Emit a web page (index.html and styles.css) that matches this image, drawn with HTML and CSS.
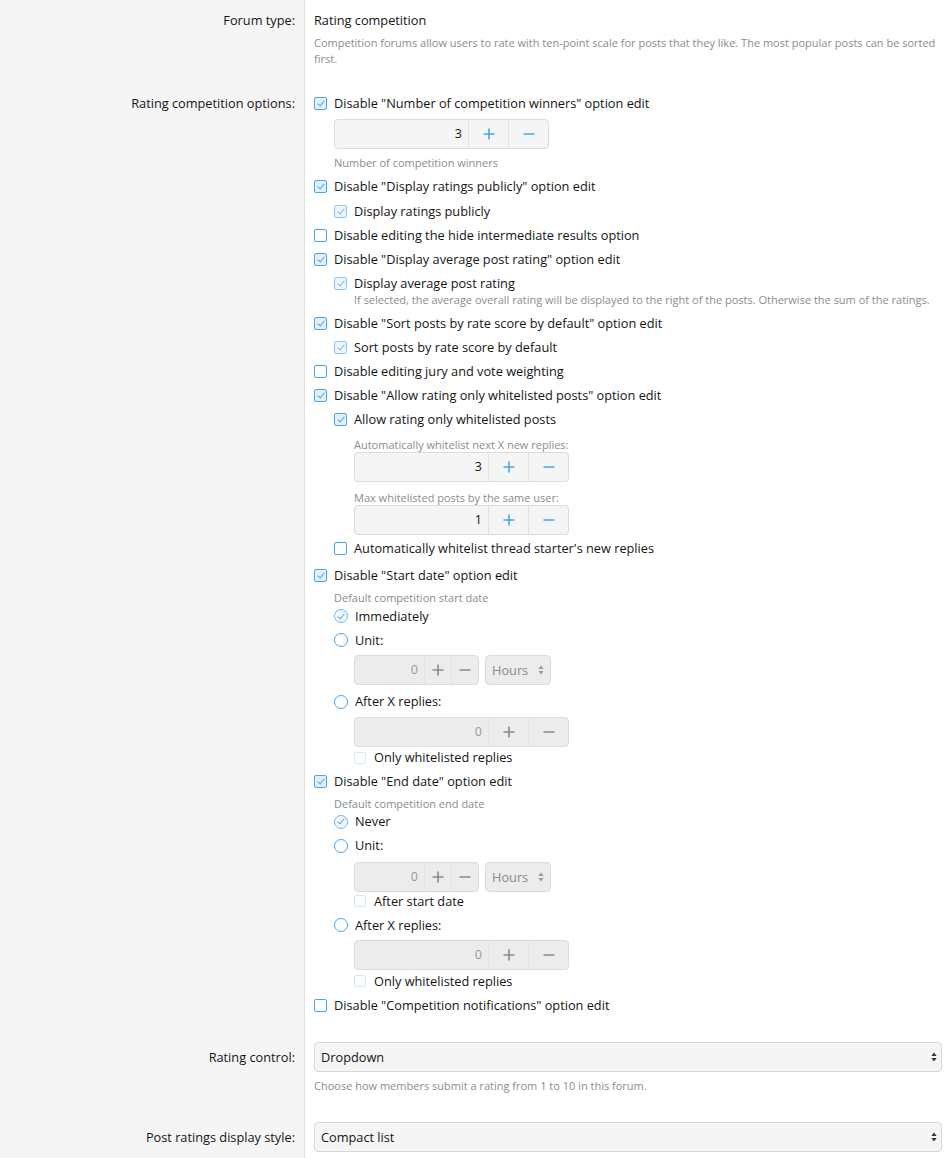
FILE: index.html
```html
<!DOCTYPE html>
<html>
<head>
<meta charset="utf-8">
<link rel="stylesheet" href="styles.css">
</head>
<body>
<div class="form">
  <div class="row">
    <div class="row-label">Forum type:</div>
    <div class="row-value">
      <div class="text">Rating competition</div>
      <div class="explain explain-first">Competition forums allow users to rate with ten-point scale for posts that they like. The most popular posts can be sorted first.</div>
    </div>
  </div>

  <div class="row">
    <div class="row-label">Rating competition options:</div>
    <div class="row-value">
      <div class="options">
        <div class="group">
          <label class="choice"><span class="cb on"></span><span>Disable "Number of competition winners" option edit</span></label>
          <div class="sub m6">
            <div class="spin wide">
              <span class="spin-input">3</span>
              <span class="spin-btn"><svg viewBox="0 0 12 12"><path d="M6 0.5v11M0.5 6h11"/></svg></span>
              <span class="spin-btn"><svg viewBox="0 0 12 12"><path d="M0.5 6h11"/></svg></span>
            </div>
            <div class="explain m6">Number of competition winners</div>
          </div>
        </div>

        <div class="group">
          <label class="choice"><span class="cb on"></span><span>Disable "Display ratings publicly" option edit</span></label>
          <div class="sub m8">
            <label class="choice"><span class="cb on soft"></span><span>Display ratings publicly</span></label>
          </div>
        </div>

        <label class="choice"><span class="cb"></span><span>Disable editing the hide intermediate results option</span></label>

        <div class="group">
          <label class="choice"><span class="cb on"></span><span>Disable "Display average post rating" option edit</span></label>
          <div class="sub m7">
            <label class="choice"><span class="cb on soft"></span><span>Display average post rating</span></label>
            <div class="explain nested-explain">If selected, the average overall rating will be displayed to the right of the posts. Otherwise the sum of the ratings.</div>
          </div>
        </div>

        <div class="group">
          <label class="choice"><span class="cb on"></span><span>Disable "Sort posts by rate score by default" option edit</span></label>
          <div class="sub m7">
            <label class="choice"><span class="cb on soft"></span><span>Sort posts by rate score by default</span></label>
          </div>
        </div>

        <label class="choice"><span class="cb"></span><span>Disable editing jury and vote weighting</span></label>

        <div class="group">
          <label class="choice"><span class="cb on"></span><span>Disable "Allow rating only whitelisted posts" option edit</span></label>
          <div class="sub m7">
            <label class="choice"><span class="cb on"></span><span>Allow rating only whitelisted posts</span></label>
            <div class="sub m9">
              <div class="field-label">Automatically whitelist next X new replies:</div>
              <div class="spin wide">
                <span class="spin-input">3</span>
                <span class="spin-btn"><svg viewBox="0 0 12 12"><path d="M6 0.5v11M0.5 6h11"/></svg></span>
                <span class="spin-btn"><svg viewBox="0 0 12 12"><path d="M0.5 6h11"/></svg></span>
              </div>
              <div class="field-label m8">Max whitelisted posts by the same user:</div>
              <div class="spin wide">
                <span class="spin-input">1</span>
                <span class="spin-btn"><svg viewBox="0 0 12 12"><path d="M6 0.5v11M0.5 6h11"/></svg></span>
                <span class="spin-btn"><svg viewBox="0 0 12 12"><path d="M0.5 6h11"/></svg></span>
              </div>
            </div>
            <label class="choice m4"><span class="cb"></span><span>Automatically whitelist thread starter's new replies</span></label>
          </div>
        </div>

        <div class="group m3">
          <label class="choice"><span class="cb on"></span><span>Disable "Start date" option edit</span></label>
          <div class="sub m6 flat">
            <div class="explain">Default competition start date</div>
            <label class="choice m1"><span class="radio on"></span><span>Immediately</span></label>
            <label class="choice m7"><span class="radio"></span><span>Unit:</span></label>
            <div class="sub m6 inline">
              <div class="spin narrow disabled">
                <span class="spin-input">0</span>
                <span class="spin-btn"><svg viewBox="0 0 12 12"><path d="M6 0.5v11M0.5 6h11"/></svg></span>
                <span class="spin-btn"><svg viewBox="0 0 12 12"><path d="M0.5 6h11"/></svg></span>
              </div>
              <div class="unit-select">Hours<svg class="arrows" viewBox="0 0 6 10"><path d="M3 0.5L5.6 4H0.4z M3 9.5L5.6 6H0.4z"/></svg></div>
            </div>
            <label class="choice m8"><span class="radio"></span><span>After X replies:</span></label>
            <div class="sub m6">
              <div class="spin wide disabled">
                <span class="spin-input">0</span>
                <span class="spin-btn"><svg viewBox="0 0 12 12"><path d="M6 0.5v11M0.5 6h11"/></svg></span>
                <span class="spin-btn"><svg viewBox="0 0 12 12"><path d="M0.5 6h11"/></svg></span>
              </div>
              <label class="choice m2 faint"><span class="cb pale"></span><span>Only whitelisted replies</span></label>
            </div>
          </div>
        </div>

        <div class="group">
          <label class="choice"><span class="cb on"></span><span>Disable "End date" option edit</span></label>
          <div class="sub m5 flat">
            <div class="explain">Default competition end date</div>
            <label class="choice m1"><span class="radio on"></span><span>Never</span></label>
            <label class="choice m7"><span class="radio"></span><span>Unit:</span></label>
            <div class="sub m8">
              <div class="inline">
                <div class="spin narrow disabled">
                  <span class="spin-input">0</span>
                  <span class="spin-btn"><svg viewBox="0 0 12 12"><path d="M6 0.5v11M0.5 6h11"/></svg></span>
                  <span class="spin-btn"><svg viewBox="0 0 12 12"><path d="M0.5 6h11"/></svg></span>
                </div>
                <div class="unit-select">Hours<svg class="arrows" viewBox="0 0 6 10"><path d="M3 0.5L5.6 4H0.4z M3 9.5L5.6 6H0.4z"/></svg></div>
              </div>
              <label class="choice m0 faint"><span class="cb pale"></span><span>After start date</span></label>
            </div>
            <label class="choice m7"><span class="radio"></span><span>After X replies:</span></label>
            <div class="sub m6">
              <div class="spin wide disabled">
                <span class="spin-input">0</span>
                <span class="spin-btn"><svg viewBox="0 0 12 12"><path d="M6 0.5v11M0.5 6h11"/></svg></span>
                <span class="spin-btn"><svg viewBox="0 0 12 12"><path d="M0.5 6h11"/></svg></span>
              </div>
              <label class="choice m2 faint"><span class="cb pale"></span><span>Only whitelisted replies</span></label>
            </div>
          </div>
        </div>

        <label class="choice"><span class="cb"></span><span>Disable "Competition notifications" option edit</span></label>
      </div>
    </div>
  </div>

  <div class="row">
    <div class="row-label for-select">Rating control:</div>
    <div class="row-value">
      <div class="select">Dropdown<svg class="arrows dark" viewBox="0 0 6 10"><path d="M3 0.5L5.6 4H0.4z M3 9.5L5.6 6H0.4z"/></svg></div>
      <div class="explain m6">Choose how members submit a rating from 1 to 10 in this forum.</div>
    </div>
  </div>

  <div class="row">
    <div class="row-label for-select">Post ratings display style:</div>
    <div class="row-value">
      <div class="select">Compact list<svg class="arrows dark" viewBox="0 0 6 10"><path d="M3 0.5L5.6 4H0.4z M3 9.5L5.6 6H0.4z"/></svg></div>
    </div>
  </div>
</div>
</body>
</html>
```
FILE: styles.css
```css
* { box-sizing: border-box; }

html, body {
  margin: 0;
  background: #fff;
}

body {
  font-family: "Open Sans", "Noto Sans", sans-serif;
  font-size: 12.75px;
  color: #141414;
  min-height: 1158px;
}

.form {
  display: flex;
  flex-direction: column;
}

.row {
  display: grid;
  grid-template-columns: 305px 1fr;
}

.row-label {
  background: #f5f5f5;
  border-right: 1px solid #dfdfdf;
  text-align: right;
  padding: 12px 9px 16px 0;
  line-height: 17px;
}

.row-label.for-select {
  padding-top: 19px;
}

.row-value {
  padding: 12px 7px 16px 9px;
  line-height: 17px;
  min-width: 0;
}

.text {
  line-height: 17px;
}

.explain {
  font-size: 11px;
  line-height: 16px;
  color: #8c8c8c;
}

.explain-first {
  margin-top: 6px;
}

.nested-explain {
  margin-left: 20px;
  white-space: nowrap;
}

.field-label {
  font-size: 11px;
  line-height: 15px;
  color: #8c8c8c;
}

.options {
  display: flex;
  flex-direction: column;
  gap: 7px;
}

.group {
  display: flex;
  flex-direction: column;
}

.sub {
  display: flex;
  flex-direction: column;
  margin-left: 20px;
}

.m0 { margin-top: 0.5px; }
.m1 { margin-top: 1.5px; }
.m2 { margin-top: 2.5px; }
.m3 { margin-top: 3px; }
.m4 { margin-top: 4.5px; }
.m5 { margin-top: 5.5px; }
.m6 { margin-top: 6.5px; }
.m7 { margin-top: 7px; }
.m8 { margin-top: 8px; }
.m9 { margin-top: 9px; }

.choice {
  display: flex;
  align-items: center;
  gap: 7px;
  height: 17px;
  line-height: 17px;
  white-space: nowrap;
}

.choice.faint {
  gap: 8px;
}

.cb {
  flex: none;
  width: 13px;
  height: 13px;
  border: 1px solid #47a7eb;
  border-radius: 2px;
  background: #fff;
  position: relative;
}

.cb.on {
  background: #e3f0fb;
}

.cb.on::after {
  content: "";
  position: absolute;
  left: 3.5px;
  top: 1.2px;
  width: 3px;
  height: 6px;
  border-right: 1.5px solid #47a7eb;
  border-bottom: 1.5px solid #47a7eb;
  transform: rotate(40deg);
}

.cb.soft {
  border-color: #8ec7f1;
  background: #eef6fd;
}

.cb.soft::after {
  border-color: #7dbdee;
}

.cb.pale {
  width: 12px;
  height: 12px;
  border-color: #d6e8f7;
  background: #fff;
}

.radio {
  flex: none;
  width: 14px;
  height: 14px;
  border: 1.3px solid #47a7eb;
  border-radius: 50%;
  background: #fff;
  position: relative;
}

.radio.on {
  border-color: #6fb6ec;
  background: #f2f8fd;
}

.radio.on::after {
  content: "";
  position: absolute;
  left: 3.6px;
  top: 1.6px;
  width: 3px;
  height: 6px;
  border-right: 1.4px solid #5aaee9;
  border-bottom: 1.4px solid #5aaee9;
  transform: rotate(40deg);
}

.spin {
  display: flex;
  height: 30px;
  border: 1px solid #dcdcdc;
  border-radius: 4px;
  background: #f5f5f5;
  overflow: hidden;
}

.spin.wide { width: 215px; }
.spin.narrow { width: 125px; }

.spin-input {
  flex: 1;
  text-align: right;
  padding-right: 6px;
  line-height: 28px;
  font-size: 12.5px;
  color: #141414;
}

.spin-btn {
  flex: none;
  width: 40px;
  display: flex;
  align-items: center;
  justify-content: center;
  border-left: 1px solid #e2e2e2;
}

.spin.narrow .spin-btn {
  width: 27px;
}

.spin-btn svg {
  width: 12px;
  height: 12px;
  fill: none;
  stroke: #47a7eb;
  stroke-width: 1.6;
}

.spin.disabled {
  background: #ececec;
}

.spin.disabled .spin-input {
  color: #9a9a9a;
}

.spin.disabled .spin-btn svg {
  stroke: #8a8a8a;
}

.inline {
  display: flex;
  flex-direction: row;
  gap: 6px;
  align-items: center;
}

.unit-select {
  width: 66px;
  height: 30px;
  border: 1px solid #dcdcdc;
  border-radius: 4px;
  background: #ececec;
  color: #8a8a8a;
  line-height: 28px;
  padding-left: 6px;
  display: flex;
  align-items: center;
  justify-content: space-between;
  padding-right: 6px;
}

.arrows {
  width: 6px;
  height: 10px;
  fill: #9a9a9a;
}

.arrows.dark {
  fill: #333;
}

.select {
  height: 30px;
  border: 1px solid #d8d8d8;
  border-radius: 4px;
  background: #f5f5f5;
  display: flex;
  align-items: center;
  justify-content: space-between;
  padding: 0 4px 0 6px;
  line-height: 28px;
}
```
